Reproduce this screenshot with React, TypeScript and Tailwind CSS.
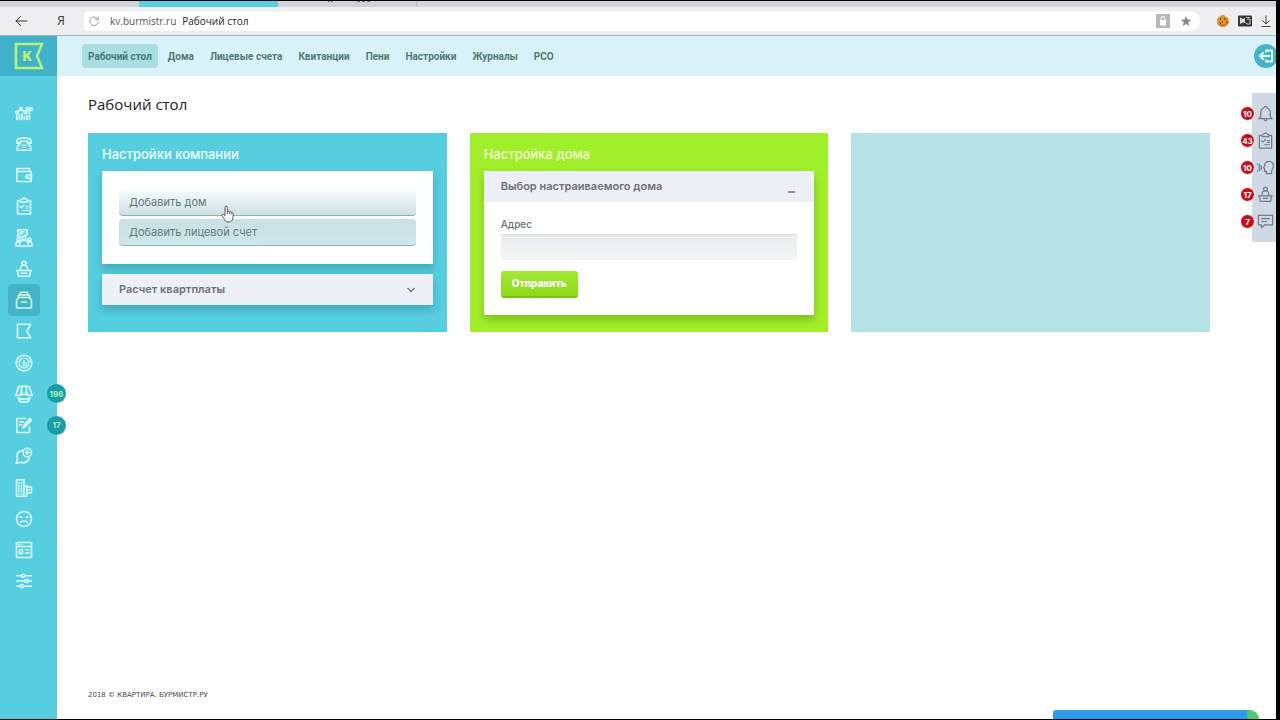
import React from 'react';
import clsx from 'clsx';

type IconProps = { children: React.ReactNode; className?: string };

const Icon: React.FC<IconProps> = ({ children, className }) => (
    <svg
        viewBox="0 0 18 18"
        fill="none"
        stroke="currentColor"
        strokeLinejoin="round"
        strokeLinecap="round"
        aria-hidden="true"
        className={clsx('shrink-0', className)}
    >
        {children}
    </svg>
);

const clipboard = (
    <>
        <path d="M5.5 3.5H2.5v13.5h13V3.5h-3M5.5 5h7V3.2L9 .9 5.5 3.2z" />
        <path d="M4.8 9.2l1.6 1.6 2.6-3M10.8 9h2.5M10.8 11h2.5M8 13.5h5.3" strokeWidth="1.1" />
    </>
);

const podium = (
    <>
        <circle cx="9" cy="3.2" r="2" />
        <path d="M5.5 10V8.5a3.5 3.5 0 0 1 7 0V10M1.5 10.5h15M2.5 10.5l1 5.7h11l1-5.7M6.5 13.2h5" />
    </>
);

const menu = [
    {
        label: 'Статистика',
        icon: (
            <>
                <path d="M2 15.5v-4M4.5 15.5v-5M7 15.5V10M9.5 15.5v-3M12 15.5v-4M14.5 15.5V9" strokeWidth="1.7" />
                <circle cx="1.8" cy="8.5" r="1.3" />
                <circle cx="6" cy="5" r="1.4" />
                <circle cx="10.5" cy="8.5" r="1.3" />
                <circle cx="12.5" cy="4.5" r="1.3" />
                <circle cx="16.3" cy="5" r="1.4" />
                <path d="M2.7 7.5L5 6M7 6l2.6 1.7M11 7.3l1-1.5M15.5 6.2L13.5 8" />
            </>
        ),
    },
    {
        label: 'Звонки',
        icon: (
            <>
                <path d="M1.7 6.5C2 1.8 16 1.8 16.3 6.5v1.6h-3.6V6.3H5.3v1.8H1.7z" />
                <path d="M5.3 8.1L2.3 12v3.2h13.4V12l-3-3.9" />
                <path d="M6.5 10.3h5M7.5 12.5h3" strokeWidth="1.2" />
            </>
        ),
    },
    {
        label: 'Кошелёк',
        icon: (
            <>
                <path d="M14.5 5.5v-3H1.8v13h14.4v-10H2" />
                <path d="M16.5 8.7h-3.8a1.8 1.8 0 0 0 0 3.7h3.8z" />
                <path d="M13 10.5h.2" />
            </>
        ),
    },
    { label: 'Задания', icon: clipboard },
    {
        label: 'Собрания',
        icon: (
            <>
                <path d="M6 7.5H2.8V.8H12v5.5H9M5 3h4M5 5h2" />
                <circle cx="9" cy="9.3" r="1.8" />
                <circle cx="3.5" cy="10.5" r="1.5" />
                <circle cx="14.5" cy="10.5" r="1.5" />
                <path d="M4.8 17v-2.5a4.2 3 0 0 1 8.4 0V17zM4 17H.8v-2a2.6 2.4 0 0 1 3.5-2M14 17h3.2v-2a2.6 2.4 0 0 0-3.5-2" />
            </>
        ),
    },
    { label: 'Приём', icon: podium },
    {
        label: 'Рабочий стол',
        active: true,
        icon: (
            <>
                <path d="M5.5 3.8V1.3h7v2.5M3.5 6.5V4h11v2.5" />
                <path d="M3.5 6.5h11l2 2.5v8h-15V9zM6.5 11h5" />
            </>
        ),
    },
    { label: 'Флаг', icon: <path d="M2.5 2.2h13.2L12 9l3.7 6.8H2.5z" /> },
    {
        label: 'Финансы',
        icon: (
            <>
                <circle cx="9" cy="9" r="7.8" />
                <circle cx="9" cy="9" r="5" strokeWidth="1.2" />
                <path d="M9 6.3v5.4h1.5a1.3 1.3 0 0 0 0-2.8H7.5M7.5 11.7H9" strokeWidth="1.1" />
            </>
        ),
    },
    {
        label: 'Жильцы',
        badge: '196',
        icon: (
            <>
                <path d="M6.5 7.5V3.8a2.5 2.8 0 0 1 5 0v3.7" />
                <path d="M6.5 1.5C4 .5 2.8 2 2.8 4.5L.8 10.5h4L6.5 7.5M11.5 1.5C14 .5 15.2 2 15.2 4.5l2 6h-4l-1.7-3M4.8 10.5L9 9l4.2 1.5" />
                <path d="M3 12.8c2.5 1.8 9.5 1.8 12 0l-1.5 3.5c-2 1.2-7 1.2-9 0z" />
            </>
        ),
    },
    {
        label: 'Заявки',
        badge: '17',
        icon: (
            <>
                <path d="M11 2.5H1.8v14h12.7V11M4.5 6h4M4.5 9h2" />
                <path d="M15.3 2.2l1.8 1.8-6.5 7-3 1.2 1-3z" fill="currentColor" strokeWidth="1" />
            </>
        ),
    },
    {
        label: 'Обращения',
        icon: (
            <>
                <path d="M7.5 3.5C2.5 4 .5 8.5 2.5 12.2L1.2 16.5l4.3-1.2c4.5 1.3 8-.8 8.7-4.5" />
                <circle cx="12.3" cy="5.5" r="4.3" />
                <path d="M12.3 3.5v4M10.3 5.5h4" />
            </>
        ),
    },
    {
        label: 'Объекты',
        icon: (
            <>
                <path d="M1.5.8H9v16.4H1.5zM9 6.8h2.8v10.4H9M11.8 8h4.7v5.8h-4.7" />
                <path d="M4 3.5v11.5M6.5 3.5v11.5" strokeDasharray=".8 2" />
                <path d="M13.5 10.8h.8" />
            </>
        ),
    },
    {
        label: 'Жалобы',
        icon: (
            <>
                <circle cx="9" cy="9" r="7.5" />
                <path d="M5.5 12.5c1.5-2 5.5-2 7 0M5 7h1.8M11.2 7H13" />
            </>
        ),
    },
    {
        label: 'Сайт',
        icon: (
            <path d="M1.5 1.5h15v15h-15zM1.5 5.5h15M4 3.5h.2M6.5 3.5h.2M4.5 8.5h3v4h-3zM10.5 8.8H14M10.5 12H14" />
        ),
    },
    {
        label: 'Параметры',
        icon: (
            <>
                <path d="M1.5 3.8h5M10 3.8h6.5M1.5 9h8.5M13.5 9h3M1.5 14.2H5M8.5 14.2h8" />
                <circle cx="8.2" cy="3.8" r="1.6" />
                <circle cx="11.7" cy="9" r="1.6" />
                <circle cx="6.8" cy="14.2" r="1.6" />
            </>
        ),
    },
];

const navItems = ['Рабочий стол', 'Дома', 'Лицевые счета', 'Квитанции', 'Пени', 'Настройки', 'Журналы', 'РСО'];

const notices = [
    {
        label: 'Уведомления',
        count: 10,
        icon: <path d="M7.5 3a1.5 1.5 0 1 1 3 0c2.5.8 3.5 2.5 3.5 5v4l2 2.5H2L4 12V8c0-2.5 1-4.2 3.5-5zM7.5 15a1.5 1.5 0 0 0 3 0" />,
    },
    { label: 'Задачи', count: 43, icon: clipboard },
    {
        label: 'Голосовые',
        count: 10,
        icon: (
            <>
                <path d="M10 15.5v-2.5H8V10L6.8 9.5 8 7.5C8 .8 17.5 1 17.5 7c0 3-2 3.5-2 6v2.5z" />
                <path d="M4.5 7v4M2.5 5.5v7M.5 5c-1.5 2.5-1.5 5.5 0 8" />
            </>
        ),
    },
    { label: 'Приём граждан', count: 17, icon: podium },
    { label: 'Сообщения', count: 7, icon: <path d="M1.5 2.5h15v10H8l-3.3 3.3v-3.3H1.5zM5 6h8M5 9h5" /> },
];

const BrowserBar: React.FC = () => (
    <div>
        <div className="flex h-1.5 bg-[#d3d2d6]">
            <div className="ml-[139px] w-[139px] bg-[#58cfe2]" />
            <div className="flex w-[139px] justify-end border-r border-[#b9b8bc]">
                <svg viewBox="0 0 60 4" className="mr-8 h-1 w-[60px]" stroke="#77767c" aria-hidden="true">
                    <path d="M4 .5h2M7 .5h2M33 .5h3M38 .5h3M43 .5h3" />
                </svg>
            </div>
        </div>
        <div className="flex h-[29px] items-center border-b border-[#9fb9c0] bg-[#eeeef0] text-[#333]">
            <button aria-label="Назад" className="ml-3 text-[#333]">
                <Icon className="h-[18px] w-[18px] stroke-1">
                    <path d="M4 9h11M8.5 4.5L4 9l4.5 4.5" />
                </Icon>
            </button>
            <button className="ml-6 w-3.5 text-center font-['Open_Sans',sans-serif] text-xs">Я</button>
            <div className="ml-4 flex h-5 flex-1 items-center rounded-l-sm rounded-r-[10px] bg-white font-['Open_Sans',sans-serif] text-[10px]">
                <svg viewBox="0 0 12 12" className="ml-1 h-3 w-3" fill="none" stroke="#a0a0a0" aria-hidden="true">
                    <path d="M10 4.5A4.3 4.3 0 1 0 10.3 7M10.3 1.5v3.2H7" />
                </svg>
                <span className="ml-2.5 text-[#555]">kv.burmistr.ru</span>
                <span className="ml-1.5 text-[#222]">Рабочий стол</span>
                <svg viewBox="0 0 14 14" className="ml-auto h-3.5 w-3.5" aria-hidden="true">
                    <path d="M0 0h14v14H0z" fill="#b7b7b9" />
                    <path d="M4 6h6v5.5H4z" fill="#fff" />
                    <path d="M5 6V4.5a2 2 0 0 1 4 0V6" fill="none" stroke="#fff" />
                </svg>
                <svg viewBox="0 0 12 12" className="ml-2.5 mr-2 h-3 w-3" fill="#8a8a8c" aria-hidden="true">
                    <path d="M6 1l1.4 3.5 3.8.3-2.9 2.4.9 3.7L6 8.9l-3.2 2 .9-3.7L.8 4.8l3.8-.3z" />
                </svg>
            </div>
            <svg viewBox="0 0 14 14" className="ml-4 h-3.5 w-3.5" aria-hidden="true">
                <path d="M4.5 1.5L8 .8l1.5 2 2 .5 1.7 3-.7 4-3.500 2.700H4.500L1.300 10 1 5z" fill="#dd9630" />
                <path d="M3 8l2 3h4l3-3" fill="none" stroke="#b56d18" />
                <path d="M4 5h1M8 5h1.5M6 8h1M10 8h1M4 9h1" stroke="#67360b" strokeWidth="1.5" />
            </svg>
            <svg viewBox="0 0 14 14" className="ml-2 h-3.5 w-3.5" aria-hidden="true">
                <rect y="1.5" width="14" height="11" rx="1" fill="#343638" />
                <path d="M2 3.5l3 1.5 2-1v5L5 8.5 2 10z" fill="#ddd" />
                <path d="M9 5h3v5H9l-1.5-1.5" fill="none" stroke="#ccc" />
                <path d="M8 3.5h4" stroke="#aaa" />
            </svg>
            <button aria-label="Загрузки" className="ml-2 mr-1">
                <svg viewBox="0 0 12 12" className="h-3 w-3" fill="none" stroke="#444" aria-hidden="true">
                    <path d="M6 .5v8M2.5 5.5L6 9l3.5-3.5M1.5 11.5h9" />
                </svg>
            </button>
        </div>
    </div>
);

const Sidebar: React.FC = () => (
    <aside className="w-[57px] shrink-0 bg-[#56cee0]">
        <a href="#home" aria-label="Квартира" className="flex h-10 items-center justify-center bg-[#41b0c9]">
            <svg viewBox="0 0 30 28" className="h-7 w-[30px]" aria-hidden="true">
                <path d="M2 2h26l-5 12 5 12H2z" fill="none" stroke="#b3f57c" strokeWidth="2.5" />
                <text x="8" y="19" fill="#b3f57c" className="font-['Open_Sans',sans-serif] text-sm font-extrabold">К</text>
            </svg>
        </a>
        <nav className="mt-[21px] grid h-[500px] auto-rows-fr pl-2">
            {menu.map((item) => (
                <a key={item.label} href="#menu" aria-label={item.label} className="relative flex items-center">
                    <span
                        className={clsx(
                            'flex h-8 w-8 items-center justify-center rounded',
                            item.active ? 'bg-[#43b4c6] text-[#d3f7e6]' : 'text-[#dcfafb]'
                        )}
                    >
                        <Icon className="h-[18px] w-[18px] stroke-[1.6]">{item.icon}</Icon>
                    </span>
                    {item.badge && (
                        <span className="absolute -right-[9px] flex h-[19px] w-[19px] items-center justify-center rounded-full bg-[#1a9cab] text-[8px] font-bold text-[#a9f5b4]">
                            {item.badge}
                        </span>
                    )}
                </a>
            ))}
        </nav>
    </aside>
);

const TopNav: React.FC = () => (
    <header className="flex h-10 items-center overflow-hidden bg-[#d8f2f7] pl-[25px]">
        <nav className="flex gap-1 font-['Roboto',sans-serif] text-[10px] font-bold text-[#53767c]">
            {navItems.map((name, i) => (
                <a
                    key={name}
                    href="#section"
                    className={clsx('flex h-6 items-center rounded px-1.5', i === 0 && 'bg-[#aadfe1] text-[#467a7c]')}
                >
                    {name}
                </a>
            ))}
        </nav>
        <button aria-label="Выход" className="-mr-0.5 ml-auto flex h-6 w-6 items-center justify-center rounded-full bg-[#49b3c6] text-[#e4fbff]">
            <Icon className="h-[18px] w-[18px] stroke-2">
                <path d="M9 4.5V3.5h6v11H9v-1M12 9H3M6 6L3 9l3 3" />
            </Icon>
        </button>
    </header>
);

const CompanyCard: React.FC = () => (
    <section className="bg-[#56cee0] px-3.5 pb-[27px]">
        <h2 className="pt-[9px] pb-[5px] text-[13px] leading-6 font-medium text-[#f0fdff]">Настройки компании</h2>
        <div className="bg-white px-[17px] py-[18px] shadow-[0_5px_8px_rgba(0,60,80,0.25)]">
            <div className="relative flex flex-col gap-[3px]">
                <button className="h-[27px] rounded-b border-b border-[#84b6bd] bg-linear-to-b from-[#f6fdfd] to-[#cfe0e4] px-2.5 text-left text-[11px] text-[#66777b]">
                    Добавить дом
                </button>
                <button className="h-[27px] rounded border-b border-[#84b6bd] bg-linear-to-b from-[#c9e1e3] to-[#cfe5e7] px-2.5 text-left text-[11px] text-[#66777b]">
                    Добавить лицевой счет
                </button>
                <svg viewBox="0 0 13 18" className="absolute top-4 left-[102px] h-[18px] w-[13px]" aria-hidden="true">
                    <path
                        d="M4 10.5V2a1.2 1.2 0 0 1 2.3 0v4.5c.6-.7 1.8-.5 2 .3.7-.5 1.7-.2 1.9.6.8-.4 1.8.1 1.8 1v4c0 2.5-1.5 4.6-4.5 4.6-2.8 0-3.7-1.6-4.7-3.6L.8 10.5c-.3-1 .9-1.800 1.700-.9z"
                        fill="#fff"
                        stroke="#444"
                        strokeWidth=".9"
                    />
                    <path d="M6.3 6.5V9M8.3 7v2M10.2 7.5v2" stroke="#444" strokeWidth=".8" />
                </svg>
            </div>
        </div>
        <button className="mt-2.5 flex h-[31px] w-full items-center justify-between bg-[#edf0f7] px-[17px] text-[11px] font-semibold text-[#6c7077] shadow-[0_5px_8px_rgba(0,60,80,0.25)]">
            Расчет квартплаты
            <svg viewBox="0 0 10 10" className="h-2.5 w-2.5" fill="none" stroke="#6c7480" strokeWidth="1.3" aria-hidden="true">
                <path d="M1.5 3L5 6.5 8.5 3" />
            </svg>
        </button>
    </section>
);

const HouseCard: React.FC = () => (
    <section className="bg-[#a1ee2b] px-3.5 pb-[17px]">
        <h2 className="pt-[9px] pb-[5px] text-[13px] leading-6 font-medium text-[#f4ffd8]">Настройка дома</h2>
        <div className="bg-white shadow-[0_5px_8px_rgba(60,110,0,0.35)]">
            <button className="flex h-[31px] w-full items-center justify-between bg-[#ecf0f6] px-[17px] text-[11px] font-semibold text-[#6c7077]">
                Выбор настраиваемого дома
                <svg viewBox="0 0 12 12" className="h-3 w-3" stroke="#6c7480" strokeWidth="1.5" aria-hidden="true">
                    <path d="M3 11h7" />
                </svg>
            </button>
            <form className="flex flex-col items-start px-[17px] pt-[15px] pb-[17px]">
                <label htmlFor="address" className="mb-[3px] text-[10px] leading-[14px] font-medium text-[#6b7076]">
                    Адрес
                </label>
                <input
                    id="address"
                    type="text"
                    className="h-[26px] w-full border-t border-[#d8dbde] bg-linear-to-b from-[#e9ebed] to-[#f3f5f7] px-2 text-[11px]"
                />
                <button
                    type="button"
                    className="mt-[11px] h-[27px] rounded-[3px] border-b-2 border-[#78bf16] bg-linear-to-b from-[#a4e635] to-[#8bdb16] px-[11px] text-[10px] font-extrabold text-white"
                >
                    Отправить
                </button>
            </form>
        </div>
    </section>
);

const NoticeRail: React.FC = () => (
    <div className="absolute top-[57px] right-0 flex w-6 flex-col bg-[#d0d8e3] py-[7px]">
        {notices.map((n) => (
            <button key={n.label} aria-label={n.label} className="relative flex h-[27px] items-center justify-end pr-0.5 text-[#6e7d90]">
                <Icon className="h-[17px] w-[17px] stroke-[1.3]">{n.icon}</Icon>
                <span className="absolute right-[21px] flex h-[15px] w-[15px] items-center justify-center rounded-full border border-white bg-[#c4101d] text-[8px] font-bold text-white">
                    {n.count}
                </span>
            </button>
        ))}
    </div>
);

const App: React.FC = () => (
    <div className="flex min-h-screen flex-col border-t border-r-4 border-b border-black bg-white font-['Inter',sans-serif]">
        <BrowserBar />
        <div className="relative flex flex-1">
            <Sidebar />
            <div className="flex min-w-0 flex-1 flex-col">
                <TopNav />
                <main className="flex flex-1 flex-col pr-[66px] pl-[31px]">
                    <h1 className="mt-4 font-['Open_Sans',sans-serif] text-[15px] leading-6 text-[#222]">Рабочий стол</h1>
                    <div className="mt-[17px] grid grid-cols-3 gap-[23px]">
                        <CompanyCard />
                        <HouseCard />
                        <section className="bg-[#b8e3e6]" />
                    </div>
                    <footer className="mt-auto pb-4 font-['DejaVu_Sans',sans-serif] text-[7px] leading-4 text-[#444]">
                        2018 © КВАРТИРА. БУРМИСТР.РУ
                    </footer>
                </main>
            </div>
            <NoticeRail />
            <div className="absolute right-[17px] bottom-0 flex h-[9px] w-[206px] overflow-hidden rounded-tl-sm rounded-tr-[10px] bg-[#51c878]">
                <div className="w-[194px] bg-[#2e9aec]" />
            </div>
        </div>
    </div>
);

export default App;
